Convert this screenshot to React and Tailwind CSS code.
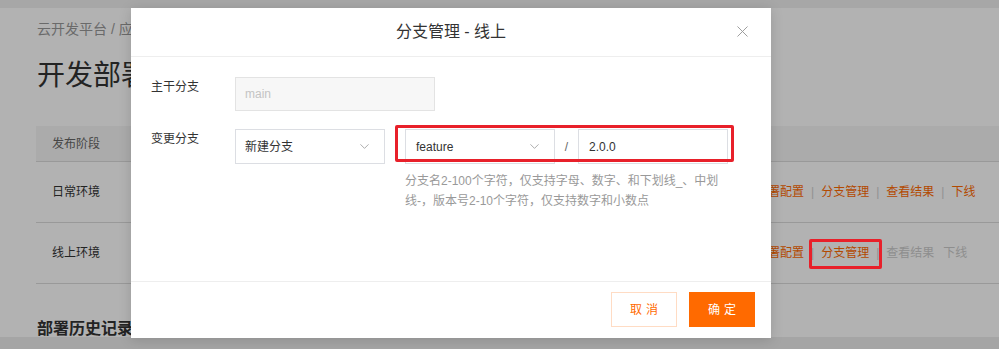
import { ChevronDown, X } from "lucide-react";

const font = { fontFamily: '"Liberation Sans", "Noto Sans CJK SC", sans-serif' };

function Actions({ online }) {
  return (
    <div className="flex items-center text-[12px] leading-[20px]">
      <span className="text-[#ff6a00]">部署配置</span>
      <span className="mx-[7px] text-[#d0d0d0]">|</span>
      <span className="text-[#ff6a00]">分支管理</span>
      <span className="mx-[7px] text-[#d0d0d0]">|</span>
      <span className={online ? "text-[#cccccc]" : "text-[#ff6a00]"}>查看结果</span>
      {online ? (
        <span className="w-[9px]" />
      ) : (
        <span className="mx-[7px] text-[#d0d0d0]">|</span>
      )}
      <span className={online ? "text-[#cccccc]" : "text-[#ff6a00]"}>下线</span>
    </div>
  );
}

function Page() {
  return (
    <div className="pl-[36px] pt-[19px] bg-white h-[349px] overflow-hidden">
      <div className="text-[14px] leading-[20px] text-[#999] pl-[1px]">云开发平台 / 应用管理</div>
      <div className="mt-[17px] text-[28px] leading-[40px] text-[#333] pl-[1px]">开发部署</div>
      <div className="mt-[30px] w-[1000px]">
        <div className="flex items-center h-[36px] bg-[#f5f5f5] border-b border-[#dcdcdc] text-[12px] text-[#666]">
          <div className="pl-[16px]">发布阶段</div>
        </div>
        <div className="flex items-center h-[61px] border-b border-[#dcdcdc] text-[12px] text-[#333]">
          <div className="w-[720px] pl-[16px]">日常环境</div>
          <Actions />
        </div>
        <div className="flex items-center h-[61px] border-b border-[#dcdcdc] text-[12px] text-[#333]">
          <div className="w-[720px] pl-[16px]">线上环境</div>
          <Actions online />
        </div>
      </div>
      <div className="mt-[34px] text-[16px] leading-[22px] font-bold text-[#333] pl-[1px]">部署历史记录</div>
    </div>
  );
}

function Select({ value, width, pl }) {
  return (
    <div
      className={`flex items-center justify-between h-[35px] border border-[#dcdee3] bg-white ${width} ${pl} pr-[12px] text-[12px] text-[#333]`}
    >
      <span>{value}</span>
      <ChevronDown size={15} strokeWidth={1.3} className="text-[#999]" />
    </div>
  );
}

export default function App() {
  return (
    <div className="relative w-[999px] h-[349px] overflow-hidden" style={font}>
      <Page />
      <div className="absolute inset-0 bg-black/30" />
      <div className="absolute left-0 right-0 top-0 h-[8px] bg-black/[0.06]" />
      <div className="absolute left-0 right-0 bottom-0 h-[12px] bg-black/[0.07]" />

      <div className="absolute left-[809px] top-[239px] w-[73px] h-[30px] border-[3px] border-[#e8202a] rounded-[2px]" />

      <div className="absolute left-[131px] top-[8px] w-[640px] bg-white shadow-[0_2px_12px_rgba(0,0,0,0.15)]">
        <div className="relative flex items-center justify-center h-[49px] border-b border-[#eeeeee]">
          <span className="text-[16px] text-[#333]">分支管理 - 线上</span>
          <X size={19} strokeWidth={1.2} className="absolute right-[19px] top-[14px] text-[#999]" />
        </div>

        <div className="relative h-[224px] px-[20px] pt-[20px]">
          <div className="flex items-start">
            <div className="w-[84px] text-[12px] leading-[20px] text-[#333]">主干分支</div>
            <div className="flex items-center w-[200px] h-[34px] border border-[#e3e3e3] bg-[#f7f7f7] pl-[9px] text-[12px] text-[#c4c4c4]">
              main
            </div>
          </div>
          <div className="flex items-start mt-[18px]">
            <div className="w-[84px] text-[12px] leading-[20px] text-[#333]">变更分支</div>
            <Select value="新建分支" width="w-[150px]" pl="pl-[9px]" />
            <div className="ml-[20px]">
              <div className="flex items-center">
                <Select value="feature" width="w-[150px]" pl="pl-[10px]" />
                <div className="w-[23px] text-center text-[12px] text-[#666]">/</div>
                <div className="flex items-center w-[150px] h-[35px] border border-[#dcdee3] pl-[10px] text-[12px] text-[#333]">
                  2.0.0
                </div>
              </div>
              <div className="mt-[7px] w-[330px] text-[12px] leading-[20px] text-[#999]">
                分支名2-100个字符，仅支持字母、数字、和下划线_、中划线-，版本号2-10个字符，仅支持数字和小数点
              </div>
            </div>
          </div>
          <div className="absolute left-[264px] top-[68px] w-[339px] h-[37px] border-[3px] border-[#e8202a] rounded-[2px]" />
        </div>

        <div className="flex items-center justify-end gap-[12px] h-[57px] border-t border-[#eeeeee] pr-[16px] pb-[1px]">
          <button className="w-[66px] h-[35px] border border-[#ffdcc4] bg-white text-[12px] text-[#ff6a00] tracking-[4px] pl-[4px]">
            取消
          </button>
          <button className="w-[66px] h-[35px] bg-[#ff6a00] text-[12px] text-white tracking-[4px] pl-[4px]">
            确定
          </button>
        </div>
      </div>
    </div>
  );
}
